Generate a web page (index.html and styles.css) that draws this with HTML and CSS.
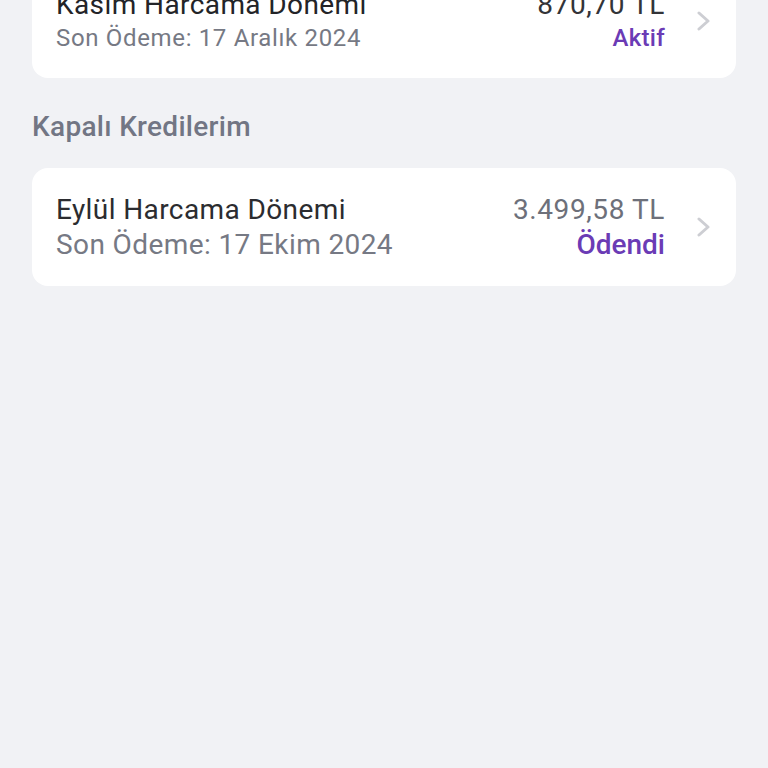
FILE: index.html
```html
<!DOCTYPE html>
<html lang="tr">
<head>
<meta charset="utf-8">
<link rel="stylesheet" href="styles.css">
</head>
<body>
<main class="page">
  <section class="list list-open">
    <a class="card card-active">
      <div class="info">
        <div class="title">Kasım Harcama Dönemi</div>
        <div class="sub">Son Ödeme: 17 Aralık 2024</div>
      </div>
      <div class="meta">
        <div class="amount amount-active">870,70 TL</div>
        <div class="status">Aktif</div>
      </div>
      <svg class="chev" width="16" height="20" viewBox="0 0 16 20"><path d="M3 2 L12 10 L3 18" fill="none" stroke="#cdced3" stroke-width="3" stroke-linecap="round" stroke-linejoin="round"/></svg>
    </a>
  </section>
  <h2 class="heading">Kapalı Kredilerim</h2>
  <section class="list">
    <a class="card">
      <div class="info">
        <div class="title">Eylül Harcama Dönemi</div>
        <div class="sub">Son Ödeme: 17 Ekim 2024</div>
      </div>
      <div class="meta">
        <div class="amount">3.499,58 TL</div>
        <div class="status">Ödendi</div>
      </div>
      <svg class="chev" width="16" height="20" viewBox="0 0 16 20"><path d="M3 2 L12 10 L3 18" fill="none" stroke="#cdced3" stroke-width="3" stroke-linecap="round" stroke-linejoin="round"/></svg>
    </a>
  </section>
</main>
</body>
</html>
```
FILE: styles.css
```css
* { box-sizing: border-box; }
html, body { margin: 0; padding: 0; }
body {
  background: #f1f2f5;
  font-family: Roboto, "Noto Sans", Arial, sans-serif;
  width: 768px;
  height: 768px;
  overflow: hidden;
}
.page {
  padding: 0 32px;
}
.list-open {
  margin-top: -40px;
}
.card {
  display: flex;
  align-items: center;
  background: #ffffff;
  border-radius: 16px;
  padding: 24px 24px;
  height: 118px;
  text-decoration: none;
}
.card-active {
  padding-top: 26px;
  padding-bottom: 22px;
}
.info {
  flex: 1;
  display: flex;
  flex-direction: column;
}
.title {
  font-size: 28px;
  line-height: 35px;
  color: #2b2c30;
  letter-spacing: 0.4px;
}
.sub {
  font-size: 28px;
  line-height: 35px;
  color: #767984;
  letter-spacing: 0.4px;
}
.card-active .title {
  color: #232428;
}
.card-active .sub {
  font-size: 24px;
  line-height: 33px;
  letter-spacing: 0.66px;
}
.meta {
  display: flex;
  flex-direction: column;
  align-items: flex-end;
}
.amount {
  font-size: 28px;
  line-height: 35px;
  color: #6d707a;
  letter-spacing: 0.6px;
}
.amount-active {
  color: #333438;
}
.status {
  font-size: 28px;
  line-height: 35px;
  font-weight: 500;
  color: #6b3bb5;
}
.card-active .status {
  font-size: 24px;
  line-height: 33px;
  letter-spacing: 0.3px;
}
.chev {
  margin-left: 31px;
  flex: none;
}
.heading {
  margin: 32px 0 24px;
  font-size: 28px;
  line-height: 34px;
  font-weight: 500;
  color: #727684;
  letter-spacing: 0.3px;
}
```
